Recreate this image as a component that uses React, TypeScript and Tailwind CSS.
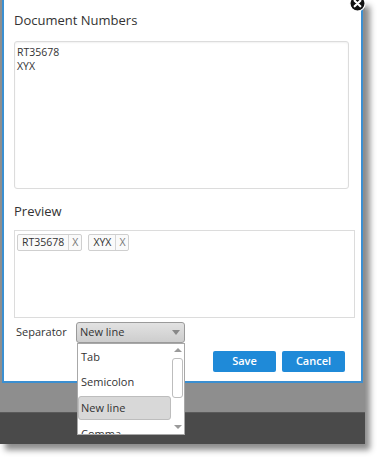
import { useState } from "react";

type Chip = { label: string };

const chips: Chip[] = [{ label: "RT35678" }, { label: "XYX" }];
const options = ["Tab", "Semicolon", "New line", "Comma"];

function CloseIcon() {
  return (
    <svg width="17" height="17" viewBox="0 0 18 18">
      <circle cx="9" cy="9" r="8" fill="#111" stroke="#fff" strokeWidth="1.2" />
      <path d="M6 6 L12 12 M12 6 L6 12" stroke="#fff" strokeWidth="2.2" strokeLinecap="round" />
    </svg>
  );
}

export default function App() {
  const [separator] = useState("New line");

  return (
    <div className="w-[378px] h-[460px] bg-white font-['Open_Sans',sans-serif] text-[#333]">
      <div className="relative w-[365px] h-[444px] bg-[#8e8e8e] shadow-[5px_6px_6px_rgba(0,0,0,0.45)] flex flex-col">
        <div className="h-[383px] ml-[2px] w-[361px] bg-white border-2 border-t-0 border-[#3b8fd1] flex flex-col pl-[10px]">
          <div className="pt-[11px] text-[13px] leading-[18px]">Document Numbers</div>
          <div className="mt-[12px] w-[335px] h-[148px] border border-[#dcdcdc] rounded-[3px] px-[2px] pt-[3px] text-[10.5px] leading-[14px] shadow-[inset_0_1px_2px_rgba(0,0,0,0.06)]">
            <div>RT35678</div>
            <div>XYX</div>
          </div>
          <div className="mt-[13px] text-[13px] leading-[18px]">Preview</div>
          <div className="mt-[10px] w-[341px] h-[88px] border border-[#dcdcdc] flex items-start gap-[6px] pl-[2px] pt-[3px]">
            {chips.map((c) => (
              <div
                key={c.label}
                className="flex items-center h-[17px] border border-[#cfcfcf] rounded-[2px] bg-[#fafafa] text-[10.5px] leading-none"
              >
                <span className="px-[4px]">{c.label}</span>
                <span className="h-full border-l border-[#d6d6d6] px-[3px] flex items-center text-[#777]">X</span>
              </div>
            ))}
          </div>
          <div className="mt-[4px] flex items-center h-[21px]">
            <span className="ml-[2px] w-[60px] text-[11px]">Separator</span>
            <div className="w-[109px] h-[21px] border border-[#9a9a9a] rounded-[3px] bg-gradient-to-b from-[#e2e2e2] to-[#cdcdcd] flex items-center justify-between pl-[3px] pr-[4px] text-[11px]">
              <span>{separator}</span>
              <span className="w-0 h-0 border-l-[4px] border-r-[4px] border-t-[5px] border-l-transparent border-r-transparent border-t-[#888]" />
            </div>
          </div>
          <div className="mt-[8px] flex justify-end gap-[6px] pr-[16px]">
            <button className="w-[63px] h-[21px] bg-[#1f8ad8] rounded-[2px] text-white text-[11px] font-semibold">Save</button>
            <button className="w-[63px] h-[21px] bg-[#1f8ad8] rounded-[2px] text-white text-[11px] font-semibold">Cancel</button>
          </div>
        </div>
        <div className="h-[29px] bg-[#8e8e8e]" />
        <div className="flex-1 bg-[#4a4a4a] border-t border-[#5a5a5a]" />

        <div className="absolute left-[349px] top-[-5px]">
          <CloseIcon />
        </div>

        <div className="absolute left-[77px] top-[343px] w-[108px] h-[92px] bg-white border border-[#a8a8a8] overflow-hidden flex">
          <div className="w-[94px] flex flex-col">
            {options.map((o) => (
              <div
                key={o}
                className={
                  o === separator
                    ? "h-[24px] shrink-0 my-[1px] flex items-center pl-[2px] text-[11px] bg-[#d8d8d8] border border-[#bdbdbd] rounded-[3px]"
                    : "h-[25.5px] shrink-0 flex items-center pl-[3px] text-[11px]"
                }
              >
                {o}
              </div>
            ))}
          </div>
          <div className="w-[13px] flex flex-col items-center pt-[4px]">
            <span className="w-0 h-0 border-l-[4px] border-r-[4px] border-b-[4px] border-l-transparent border-r-transparent border-b-[#9a9a9a]" />
            <div className="mt-[6px] w-[11px] h-[40px] border border-[#bdbdbd] rounded-[3px] bg-white" />
            <span className="mt-[27px] w-0 h-0 border-l-[4px] border-r-[4px] border-t-[4px] border-l-transparent border-r-transparent border-t-[#9a9a9a]" />
          </div>
        </div>
      </div>
    </div>
  );
}
